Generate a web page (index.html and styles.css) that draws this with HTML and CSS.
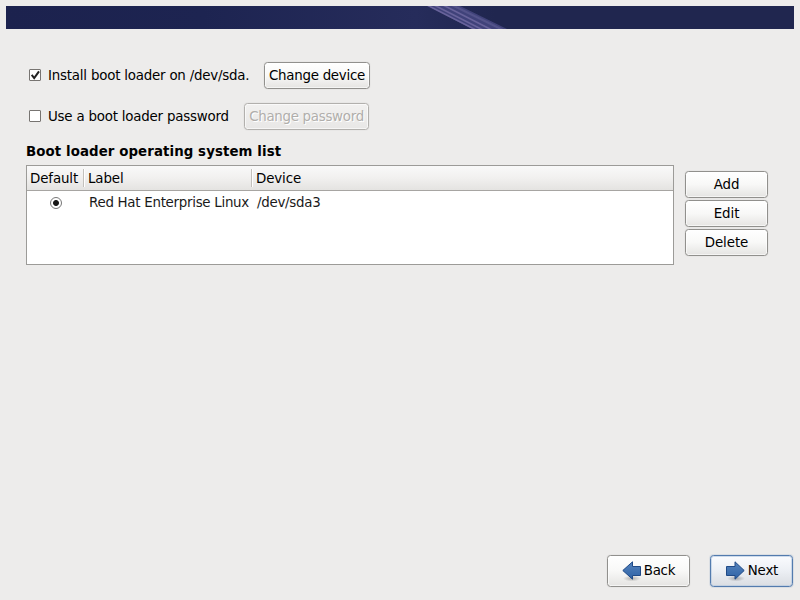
FILE: index.html
```html
<!DOCTYPE html>
<html lang="en">
<head>
<meta charset="utf-8">
<title>Boot loader</title>
<link rel="stylesheet" href="styles.css">
</head>
<body>
<header class="banner">
  <svg width="788" height="23" viewBox="0 0 788 23">
    <defs>
      <linearGradient id="bg"><stop offset="0" stop-color="#1c224e"/><stop offset=".25" stop-color="#1d2451"/><stop offset=".52" stop-color="#262c5b"/><stop offset=".62" stop-color="#20264f"/><stop offset="1" stop-color="#20264f"/></linearGradient>
      <filter id="soft" x="-10%" y="-30%" width="120%" height="160%"><feGaussianBlur stdDeviation=".7"/></filter>
    </defs>
    <rect width="788" height="23" fill="url(#bg)"/>
    <g filter="url(#soft)">
      <path d="M420-1 L452-1 L503 24 L468 24Z" fill="#41437a"/>
      <path d="M421-1 L470 24 M428-1 L477 24 M437-1 L486 24" stroke="#68639b" stroke-width="1.5"/>
      <path d="M446-1 L497 24" stroke="#53538a" stroke-width="2"/>
    </g>
  </svg>
</header>
<main class="content">
  <div class="option">
    <span class="check"><svg width="13" height="13" viewBox="0 0 13 13"><path d="M2.7 5.8 L5.2 9 L10 2.4" fill="none" stroke="#222" stroke-width="2"/></svg></span>
    <label class="install">Install boot loader on /dev/sda.</label>
    <button class="btn device">Change device</button>
  </div>
  <div class="option second">
    <span class="check"></span>
    <label class="usepass">Use a boot loader password</label>
    <button class="btn password" disabled>Change password</button>
  </div>
  <h1>Boot loader operating system list</h1>
  <section class="systems">
    <div class="table">
      <div class="row head"><span>Default</span><span>Label</span><span>Device</span></div>
      <div class="row item"><span><i class="radio"></i></span><span>Red Hat Enterprise Linux</span><span>/dev/sda3</span></div>
    </div>
    <div class="actions">
      <button class="btn">Add</button>
      <button class="btn">Edit</button>
      <button class="btn">Delete</button>
    </div>
  </section>
</main>
<footer>
  <button class="btn nav">
    <svg width="22" height="22" viewBox="0 0 22 22">
      <defs><linearGradient id="arrow" x2="0" y2="1"><stop stop-color="#5583bd"/><stop offset="1" stop-color="#2e62a5"/></linearGradient>
      <radialGradient id="shade"><stop stop-color="#000" stop-opacity=".28"/><stop offset="1" stop-color="#000" stop-opacity="0"/></radialGradient></defs>
      <ellipse cx="11" cy="18.5" rx="9" ry="3" fill="url(#shade)"/>
      <path d="M1.8 10.5 L11.5 1.8 V6.5 H19.5 V15.5 H11.5 V19.2Z" fill="url(#arrow)" stroke="#204a87"/>
    </svg><span>Back</span>
  </button>
  <button class="btn nav focus">
    <svg width="22" height="22" viewBox="0 0 22 22">
      <ellipse cx="11" cy="18.5" rx="9" ry="3" fill="url(#shade)"/>
      <path d="M19.2 10.5 L10 1.8 V6.5 H1.5 V15.5 H10 V19.2Z" fill="url(#arrow)" stroke="#204a87"/>
    </svg><span>Next</span>
  </button>
</footer>
</body>
</html>
```
FILE: styles.css
```css
* { box-sizing: border-box; }
body {
  margin: 0;
  width: 800px;
  height: 600px;
  padding: 6px;
  overflow: hidden;
  display: flex;
  flex-direction: column;
  background: #edeceb;
  color: #000;
  font: 13.4px/16px "DejaVu Sans", sans-serif;
  letter-spacing: -.21px;
  white-space: nowrap;
}
.banner { height: 23px; }
.banner svg { display: block; }
.content { flex: 1; padding: 33px 20px 0; }
.option { display: flex; align-items: center; height: 27px; padding-left: 3px; }
.second { margin-top: 14px; }
.check {
  width: 12px;
  height: 12px;
  margin: 0 7px 1px 0;
  border: 1px solid #777471;
  border-radius: 1px;
  background: #fff;
}
.check svg { display: block; margin: -1px; }
.install { width: 216px; }
.usepass { width: 196px; }
.btn {
  display: flex;
  align-items: center;
  justify-content: center;
  width: 83px;
  height: 27px;
  margin: 0;
  padding: 1px 0 0;
  border: 1px solid #91908d;
  border-radius: 3.5px;
  background: linear-gradient(#fff, #f8f8f7 50%, #e5e4e2);
  box-shadow: inset 0 0 0 1px rgba(255, 255, 255, .6), 0 0 0 1px rgba(0, 0, 0, .02);
  color: #000;
  font: inherit;
  letter-spacing: -.07px;
  white-space: nowrap;
}
.device { width: 106px; letter-spacing: -.27px; }
.password { width: 125px; letter-spacing: -.29px; }
.btn:disabled {
  color: #b0aeab;
  border-color: #b2b0ad;
  background: linear-gradient(#f2f1f0, #e8e7e6);
  text-shadow: 1px 1px #fff;
}
h1 { margin: 14px 0 5px; font-size: 13.33px; line-height: 16px; font-weight: bold; letter-spacing: .1px; }
.systems { display: flex; gap: 11px; }
.table { width: 648px; height: 100px; border: 1px solid #9c9b98; background: #fff; }
.row { display: grid; grid-template-columns: 57px 168px 1fr; }
.head {
  height: 25px;
  align-items: center;
  border-bottom: 1px solid #a7a5a2;
  background: linear-gradient(#f9f9f9, #f1f0ef 50%, #e4e3e1);
}
.head span { height: 18px; padding: 2px 0 0 3px; line-height: 16px; letter-spacing: -.12px; }
.head span:not(:last-child) { border-right: 1px solid #c3c1bd; box-shadow: 1px 0 #fff; }
.head span + span { padding-left: 4px; }
.item { height: 24px; align-items: center; color: #1a1a1a; }
.item span { padding-left: 5px; letter-spacing: -.28px; }
.item span:first-child { display: flex; padding: 0 0 1px 23px; }
.radio {
  width: 12px;
  height: 12px;
  border: 1px solid #777;
  border-radius: 50%;
  background: radial-gradient(circle, #181818 0 2.5px, #fff 3.4px);
}
.actions { display: flex; flex-direction: column; gap: 2px; padding-top: 6px; }
footer { display: flex; justify-content: flex-end; gap: 20px; padding: 0 1px 7px 0; }
.nav { height: 32px; padding: 0 1px 1px 0; gap: 2px; letter-spacing: -.22px; }
.nav svg { display: block; margin-right: -1px; }
.focus {
  padding: 0 0 1px;
  border-color: #537bae;
  background: linear-gradient(#fafbfe, #eceff4 50%, #dadde2);
  box-shadow: inset 0 0 0 1px rgba(177, 198, 224, .6), 0 0 0 1px rgba(83, 123, 174, .12);
}
```
